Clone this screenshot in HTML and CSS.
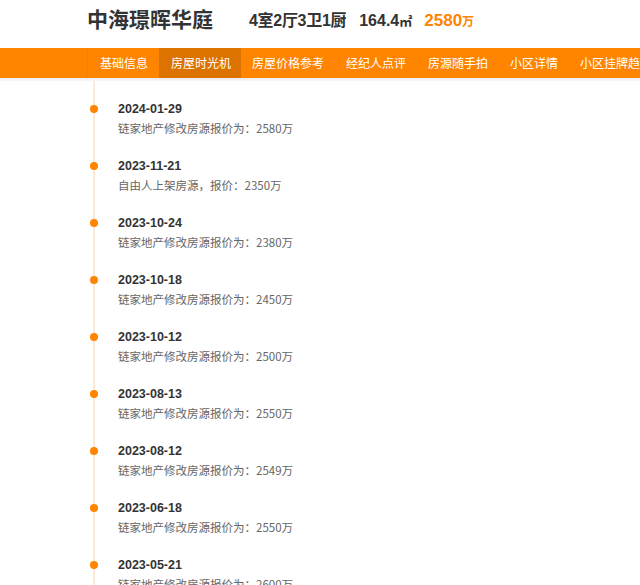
FILE: index.html
```html
<!DOCTYPE html>
<html lang="zh-CN">
<head>
<meta charset="utf-8">
<title>中海璟晖华庭</title>
<link rel="stylesheet" href="styles.css">
</head>
<body>
<header class="head">
  <h1 class="title">中海璟晖华庭</h1>
  <div class="info">
    <span class="layout">4室2厅3卫1厨</span>
    <span class="area">164.4<span class="unit-m">㎡</span></span>
    <span class="price">2580<span class="unit-w">万</span></span>
  </div>
</header>
<nav class="navbar">
  <ul class="tabs">
    <li class="tab">基础信息</li>
    <li class="tab active">房屋时光机</li>
    <li class="tab">房屋价格参考</li>
    <li class="tab">经纪人点评</li>
    <li class="tab">房源随手拍</li>
    <li class="tab">小区详情</li>
    <li class="tab">小区挂牌趋势</li>
  </ul>
</nav>
<div class="shade"></div>
<main class="timeline">
  <div class="item"><div class="date">2024-01-29</div><div class="desc">链家地产修改房源报价为<span class="colon">：</span>2580万</div></div>
  <div class="item"><div class="date">2023-11-21</div><div class="desc">自由人上架房源<span class="colon">，</span>报价<span class="colon">：</span>2350万</div></div>
  <div class="item"><div class="date">2023-10-24</div><div class="desc">链家地产修改房源报价为<span class="colon">：</span>2380万</div></div>
  <div class="item"><div class="date">2023-10-18</div><div class="desc">链家地产修改房源报价为<span class="colon">：</span>2450万</div></div>
  <div class="item"><div class="date">2023-10-12</div><div class="desc">链家地产修改房源报价为<span class="colon">：</span>2500万</div></div>
  <div class="item"><div class="date">2023-08-13</div><div class="desc">链家地产修改房源报价为<span class="colon">：</span>2550万</div></div>
  <div class="item"><div class="date">2023-08-12</div><div class="desc">链家地产修改房源报价为<span class="colon">：</span>2549万</div></div>
  <div class="item"><div class="date">2023-06-18</div><div class="desc">链家地产修改房源报价为<span class="colon">：</span>2550万</div></div>
  <div class="item"><div class="date">2023-05-21</div><div class="desc">链家地产修改房源报价为<span class="colon">：</span>2600万</div></div>
</main>
</body>
</html>
```
FILE: styles.css
```css
html, body {
  margin: 0;
  padding: 0;
  background: #fff;
  overflow: hidden;
}
body {
  font-family: "Liberation Sans", "Noto Sans CJK SC", sans-serif;
  color: #333;
}
.head {
  display: flex;
  align-items: center;
  height: 37px;
  padding-left: 87px;
  margin-bottom: 11px;
}
.title {
  margin: 0;
  font-size: 21px;
  font-weight: bold;
  color: #333;
  font-family: "Noto Sans CJK SC", sans-serif;
  line-height: 1;
}
.info {
  display: flex;
  align-items: baseline;
  margin-left: 36px;
  font-weight: bold;
  font-size: 16px;
  color: #333;
}
.layout {
  font-family: "Liberation Sans", "Noto Sans CJK SC", sans-serif;
  letter-spacing: -0.3px;
}
.area {
  margin-left: 13px;
}
.unit-m {
  font-size: 13px;
  font-family: "Noto Sans CJK SC", sans-serif;
}
.price {
  margin-left: 12px;
  color: #ff8400;
  font-size: 17px;
}
.unit-w {
  font-size: 12px;
  font-family: "Noto Sans CJK SC", sans-serif;
}
.navbar {
  height: 30px;
  background: #ff8500;
}
.tabs {
  display: flex;
  margin: 0;
  padding: 0 0 0 88px;
  list-style: none;
  height: 30px;
}
.tab {
  padding: 0 11px;
  height: 30px;
  line-height: 30px;
  font-size: 12px;
  color: #fff;
  white-space: nowrap;
  font-family: "Noto Sans CJK SC", sans-serif;
}
.tab:first-child {
  padding-left: 12px;
  box-shadow: -1px 0 0 #f48000;
}
.tab.active {
  padding-left: 12px;
  padding-right: 10px;
  background: #dc7200;
}
.shade {
  height: 3px;
  background: linear-gradient(#ececec, #f8f8f8);
}
.timeline {
  margin-left: 93px;
  border-left: 2px solid #fde9d6;
  padding-top: 19px;
  padding-left: 23px;
  height: 600px;
}
.item {
  position: relative;
  height: 57px;
}
.item::before {
  content: "";
  position: absolute;
  left: -28px;
  top: 5px;
  width: 8px;
  height: 8px;
  border-radius: 50%;
  background: #ff8400;
}
.date {
  font-size: 12.5px;
  font-weight: bold;
  color: #333;
  line-height: 18px;
  font-family: "Liberation Sans", sans-serif;
}
.desc {
  margin-top: 1px;
  font-size: 11.5px;
  color: #666;
  line-height: 18px;
  font-family: "Noto Sans CJK SC", sans-serif;
}
.colon {
  font-family: "Noto Sans CJK TC", sans-serif;
}
```
